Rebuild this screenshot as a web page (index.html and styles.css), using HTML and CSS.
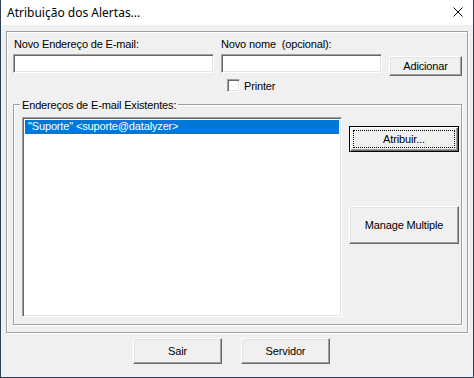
FILE: index.html
```html
<!DOCTYPE html>
<html lang="pt">
<head>
  <meta charset="UTF-8" />
  <title>Atribuição dos Alertas...</title>
  <link rel="stylesheet" href="styles.css">
</head>
<body>
  <div class="window">
    <div class="titlebar">
      <span class="title">Atribuição dos Alertas...</span>
      <svg class="close" viewBox="0 0 10 10"><path d="M0.5 0.5L9.5 9.5M9.5 0.5L0.5 9.5"/></svg>
    </div>
    <div class="client">
      <div class="frame">
        <div class="row labels">
          <span class="lbl-email">Novo Endereço de E-mail:</span>
          <span class="lbl-name">Novo nome&nbsp; (opcional):</span>
        </div>
        <div class="row inputs">
          <input class="field email" type="text" />
          <input class="field name" type="text" />
          <button class="btn add">Adicionar</button>
        </div>
        <label class="check">
          <span class="box"></span>
          <span>Printer</span>
        </label>
        <div class="group">
          <span class="legend">Endereços de E-mail Existentes:</span>
          <div class="listbox">
            <div class="item selected">"Suporte" &lt;suporte@datalyzer&gt;</div>
          </div>
          <div class="side">
            <button class="btn default"><span class="focus">Atribuir...</span></button>
            <button class="btn multi">Manage Multiple</button>
          </div>
        </div>
      </div>
      <div class="footer">
        <button class="btn foot">Sair</button>
        <button class="btn foot">Servidor</button>
      </div>
    </div>
  </div>
</body>
</html>
```

FILE: styles.css
```css
* { margin: 0; padding: 0; box-sizing: border-box; }
body {
  font-family: 'Liberation Sans', Arial, sans-serif;
  font-size: 11px;
  letter-spacing: -0.15px;
  color: #000;
  background: #f0f0f0;
}
.window {
  width: 474px;
  height: 378px;
  border: 1px solid #2e3f57;
  border-top: none;
  background: #f0f0f0;
  display: flex;
  flex-direction: column;
}
.titlebar {
  height: 25px;
  background: #fff;
  display: flex;
  align-items: center;
  padding: 0 10px 1px 6px;
  letter-spacing: 0;
}
.title {
  font-family: 'Noto Sans', sans-serif;
  font-size: 12px;
  flex: 1;
}
.close {
  width: 10px;
  height: 10px;
  fill: none;
  stroke: #000;
  stroke-width: 1;
}
.client {
  flex: 1;
  display: flex;
  flex-direction: column;
}
.frame {
  margin: 6px 5px 0 5px;
  height: 302px;
  border: 1px solid #a0a0a0;
  box-shadow: inset 1px 1px #fff, 1px 1px #fff;
  padding: 6px 0 0 6px;
  display: flex;
  flex-direction: column;
}
.row { display: flex; }
.labels { height: 13px; line-height: 13px; padding-left: 1px; }
.lbl-email { width: 207px; }
.inputs { margin-top: 3px; align-items: flex-start; }
.field {
  height: 19px;
  background: #fff;
  border: 1px solid;
  border-color: #a0a0a0 #fff #fff #a0a0a0;
  box-shadow: inset 1px 1px #696969, inset -1px -1px #e3e3e3;
  outline: none;
}
.email { width: 201px; }
.name { width: 161px; margin-left: 7px; }
.btn {
  font-family: 'Liberation Sans', Arial, sans-serif;
  font-size: 11px;
  letter-spacing: -0.15px;
  color: #000;
  background: #f0f0f0;
  border: 1px solid;
  border-color: #fff #696969 #696969 #fff;
  box-shadow: inset -1px -1px #a0a0a0, inset 1px 1px #e3e3e3;
}
.add { width: 73px; height: 20px; margin: 2px 0 0 7px; }
.check {
  display: flex;
  align-items: center;
  gap: 4px;
  margin: 3px 0 0 214px;
  height: 13px;
}
.box {
  width: 13px;
  height: 13px;
  background: #fff;
  border: 1px solid;
  border-color: #a0a0a0 #fff #fff #a0a0a0;
  box-shadow: inset 1px 1px #696969, inset -1px -1px #e3e3e3;
}
.group {
  position: relative;
  margin: 12px 0 0 0;
  width: 449px;
  height: 221px;
  border: 1px solid #a0a0a0;
  box-shadow: inset 1px 1px #fff, 1px 1px #fff;
  display: flex;
  padding: 12px 0 0 8px;
}
.legend {
  position: absolute;
  top: -6px;
  left: 6px;
  padding: 0 2px 0 2px;
  line-height: 13px;
  background: #f0f0f0;
}
.listbox {
  width: 320px;
  height: 200px;
  background: #fff;
  border: 1px solid;
  border-color: #a0a0a0 #fff #fff #a0a0a0;
  box-shadow: inset 1px 1px #696969, inset -1px -1px #e3e3e3;
  padding: 2px;
}
.item {
  height: 14px;
  line-height: 13px;
  padding-left: 3px;
}
.selected { background: #0078d7; color: #fff; }
.side {
  display: flex;
  flex-direction: column;
  margin-left: 7px;
  padding-top: 9px;
}
.default {
  width: 110px;
  height: 26px;
  border-color: #000;
  box-shadow: inset 1px 1px #fff, inset -1px -1px #696969, inset -2px -2px #a0a0a0;
  padding: 3px;
}
.focus {
  display: flex;
  align-items: center;
  justify-content: center;
  height: 100%;
  border: 1px dotted #000;
}
.multi { width: 110px; height: 38px; margin-top: 54px; }
.footer {
  display: flex;
  gap: 19px;
  padding: 5px 0 0 132px;
}
.foot { width: 89px; height: 26px; }
```
